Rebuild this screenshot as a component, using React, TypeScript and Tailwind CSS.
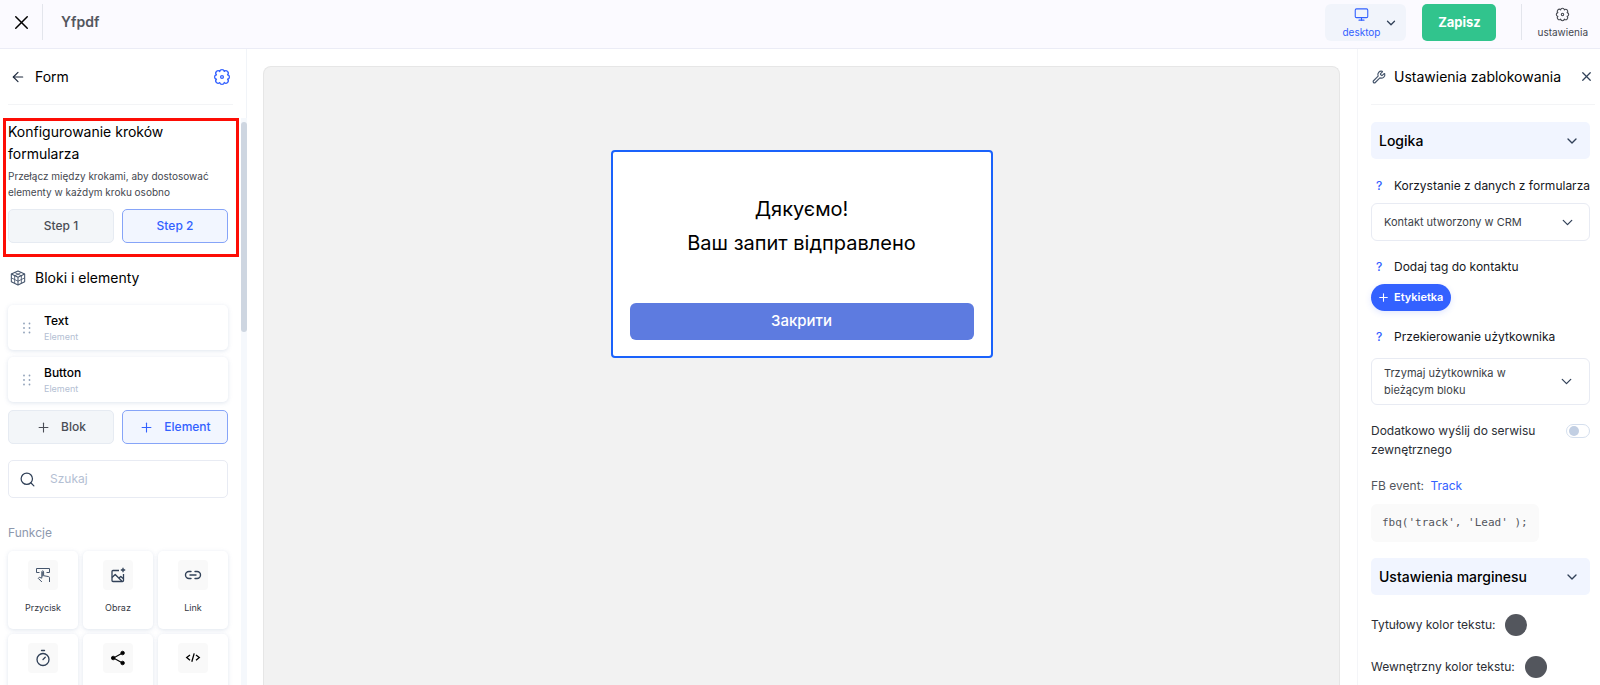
import React from 'react';
import {
    ArrowLeft,
    ChevronDown,
    Monitor,
    Plus,
    Search,
    Timer,
    Wrench,
    X,
} from 'lucide-react';

interface IconProps {
    className?: string;
}

// ── Icons ─────────────────────────────────────────

const GearIcon: React.FC<IconProps> = ({ className }) => (
    <svg viewBox="0 0 24 24" fill="none" stroke="currentColor" strokeWidth="1.7" strokeLinejoin="round" className={className} aria-hidden="true">
        <path d="M19.4 9A3.05 3.05 0 0 1 19.4 15A3.05 3.05 0 0 1 15 19.4A3.05 3.05 0 0 1 9 19.4A3.05 3.05 0 0 1 4.6 15A3.05 3.05 0 0 1 4.6 9A3.05 3.05 0 0 1 9 4.6A3.05 3.05 0 0 1 15 4.6A3.05 3.05 0 0 1 19.4 9Z" />
        <circle cx="12" cy="12" r="1.9" />
    </svg>
);

const CubeIcon: React.FC<IconProps> = ({ className }) => (
    <svg viewBox="0 0 24 24" fill="none" stroke="currentColor" strokeWidth="0.9" strokeLinejoin="round" className={className} aria-hidden="true">
        <path d="M12 1.5 22 6v11.5L12 22.5 2 17.5V6z" strokeWidth="1.6" />
        <path d="M2 6l10 5 10-5M12 11v11.5" strokeWidth="1.6" />
        <path d="M7 3.7l10 5v11.2M17 3.7l-10 5v11.2M2 11.8l10 5 10-5" strokeWidth="1.3" />
    </svg>
);

const GripIcon: React.FC<IconProps> = ({ className }) => (
    <svg viewBox="0 0 8 12" fill="currentColor" className={className} aria-hidden="true">
        <circle cx="1" cy="1.5" r="0.9" />
        <circle cx="6.5" cy="1.5" r="0.9" />
        <circle cx="1" cy="6" r="0.9" />
        <circle cx="6.5" cy="6" r="0.9" />
        <circle cx="1" cy="10.5" r="0.9" />
        <circle cx="6.5" cy="10.5" r="0.9" />
    </svg>
);

const PressIcon: React.FC<IconProps> = ({ className }) => (
    <svg viewBox="0 0 16 16" fill="none" stroke="currentColor" strokeWidth="1" strokeLinejoin="round" className={className} aria-hidden="true">
        <path d="M4.5 5.5h-3v-4h13v4h-3" />
        <path d="M6.8 11.2V4.8a.9.9 0 0 1 1.8 0v3.9l5 .9a1.1 1.1 0 0 1 .9 1.1v4.3M6.8 11.2l-2.5-1-1 1.2 3.6 3.6" />
        <path d="M7.7 5v4.5" />
    </svg>
);

const PictureIcon: React.FC<IconProps> = ({ className }) => (
    <svg viewBox="0 0 16 16" fill="none" stroke="currentColor" strokeWidth="1.3" strokeLinejoin="round" className={className} aria-hidden="true">
        <path d="M9 3.5H3a1 1 0 0 0-1 1v9a1 1 0 0 0 1 1h9.5a1 1 0 0 0 1-1V7" />
        <path d="M2 10.5l3.2-3 6.8 6.8M9 11l1.8-1.6 2.7 2.4" />
        <path d="M13 .8v4.4M10.8 3h4.4" />
    </svg>
);

const ChainIcon: React.FC<IconProps> = ({ className }) => (
    <svg viewBox="0 0 18 16" fill="none" stroke="currentColor" strokeWidth="1.4" strokeLinecap="round" className={className} aria-hidden="true">
        <path d="M7 4.5H5a3.5 3.5 0 0 0 0 7h2M11 4.5h2a3.5 3.5 0 0 1 0 7h-2M6 8h6" />
    </svg>
);

const ShareIcon: React.FC<IconProps> = ({ className }) => (
    <svg viewBox="0 0 16 16" fill="currentColor" stroke="currentColor" strokeWidth="0.8" className={className} aria-hidden="true">
        <path d="M12.5 3 3.5 8l9 5" fill="none" strokeWidth="1.1" />
        <circle cx="12.6" cy="3" r="1.8" />
        <circle cx="3.2" cy="8" r="1.8" />
        <circle cx="12.6" cy="13" r="1.8" />
    </svg>
);

const CodeIcon: React.FC<IconProps> = ({ className }) => (
    <svg viewBox="0 0 16 16" fill="none" stroke="currentColor" strokeWidth="1.3" className={className} aria-hidden="true">
        <path d="M5 5 1.7 7.6 5 10.2M11 5l3.3 2.6L11 10.2M9.2 3.4 6.8 11.8" />
    </svg>
);

// ── Data ──────────────────────────────────────────

const elements = ['Text', 'Button'];

const tools = [
    { id: 'button', label: 'Przycisk', icon: <PressIcon className="size-4 text-slate-600" /> },
    { id: 'image', label: 'Obraz', icon: <PictureIcon className="size-4 text-slate-700" /> },
    { id: 'link', label: 'Link', icon: <ChainIcon className="h-4 w-[18px] text-slate-700" /> },
    { id: 'timer', icon: <Timer size={18} strokeWidth={1.75} className="text-slate-700" /> },
    { id: 'share', icon: <ShareIcon className="size-4 text-black" /> },
    { id: 'html', icon: <CodeIcon className="size-4 text-black" /> },
];

// ── Small pieces ──────────────────────────────────

interface PairButtonProps {
    active?: boolean;
    children: React.ReactNode;
}

const PairButton: React.FC<PairButtonProps> = ({ active, children }) => (
    <button
        type="button"
        className={
            active
                ? 'flex h-[34px] items-center justify-center gap-[10px] rounded-[5px] border border-[#86a4f8] bg-[#f2f6ff] text-xs font-medium text-[#3361ff]'
                : 'flex h-[34px] items-center justify-center gap-[10px] rounded-[5px] border border-[#e6ebf2] bg-[#f3f6f9] text-xs font-medium text-[#4a4d55]'
        }
    >
        {children}
    </button>
);

const SectionToggle: React.FC<{ title: string }> = ({ title }) => (
    <button type="button" className="flex h-[37px] w-full shrink-0 items-center justify-between rounded-[5px] bg-[#f1f5ff] pr-[10px] pl-2 text-sm font-medium text-black">
        {title}
        <ChevronDown size={16} className="text-slate-700" />
    </button>
);

const HelpLabel: React.FC<{ htmlFor?: string; text: string }> = ({ htmlFor, text }) => (
    <div className="flex h-[18px] items-center">
        <button type="button" aria-label="Pomoc" className="w-[23px] pl-[5px] text-left text-xs font-medium text-[#3361ff]">?</button>
        <label htmlFor={htmlFor} className="text-xs whitespace-nowrap text-[#15171c]">{text}</label>
    </div>
);

const ColorRow: React.FC<{ id: string; label: string }> = ({ id, label }) => (
    <div className="flex h-[42px] shrink-0 items-center gap-[10px]">
        <label htmlFor={id} className="text-xs text-[#2b2e35]">{label}</label>
        <button id={id} type="button" className="size-[22px] rounded-full bg-[#53565d]" />
    </div>
);

// ── Header ────────────────────────────────────────

const Header: React.FC = () => (
    <header className="flex h-[49px] shrink-0 items-start border-b border-[#ebecf6] bg-[#fbfaff] pt-1">
        <button type="button" aria-label="Zamknij" className="flex h-9 w-[42px] items-center justify-center text-black">
            <X size={23} strokeWidth={1.5} />
        </button>
        <div className="flex h-9 flex-1 items-center border-l border-[#e3e5ec] pl-[18px]">
            <h1 className="text-sm font-semibold text-[#53565d]">Yfpdf</h1>
        </div>
        <button type="button" aria-haspopup="menu" className="flex h-[37px] w-[81px] items-center justify-end gap-1 rounded-md bg-[#f1f4fb] pr-2 text-[#3361ff]">
            <span className="flex flex-col items-center">
                <Monitor size={15} strokeWidth={1.75} />
                <span className="mt-[3px] text-[10px] leading-[14px]">desktop</span>
            </span>
            <ChevronDown size={14} strokeWidth={2.25} className="text-slate-700" />
        </button>
        <button type="button" className="ml-4 h-[37px] w-[74px] rounded-[5px] bg-[#31c48d] text-[13px] font-bold text-white">Zapisz</button>
        <div className="ml-[25px] h-9 border-l border-[#e3e5ec] pr-3 pl-[15px]">
            <button type="button" className="flex h-9 flex-col items-center justify-end pb-px text-[#44474f]">
                <GearIcon className="size-[15px]" />
                <span className="mt-[3px] text-[10px] leading-[14px]">ustawienia</span>
            </button>
        </div>
    </header>
);

// ── Left sidebar ──────────────────────────────────

const Sidebar: React.FC = () => (
    <aside className="flex w-[247px] shrink-0 flex-col border-r border-[#f1f4f8]">
        <div className="mr-[13px] ml-2 flex h-14 shrink-0 items-center border-b border-[#f3f4f6] pr-[2px] pl-[2px]">
            <button type="button" aria-label="Wstecz" className="text-slate-800">
                <ArrowLeft size={16} strokeWidth={1.75} />
            </button>
            <h2 className="ml-[9px] flex-1 text-sm text-black">Form</h2>
            <button type="button" aria-label="Ustawienia formularza" className="text-[#3361ff]">
                <GearIcon className="size-[18px]" />
            </button>
        </div>

        <div className="mt-[13px] -mr-px flex min-h-0 flex-1 justify-between">
            <div className="w-[239px] overflow-hidden pl-[3px]">
                {/* Step switcher */}
                <section className="h-[139px] border-3 border-[#fd0d05] pr-2 pl-[2px]">
                    <h3 className="text-sm leading-[22px] text-black">Konfigurowanie kroków formularza</h3>
                    <p className="mt-[3px] text-[10px] leading-4 whitespace-nowrap text-[#44474f]">
                        Przełącz między krokami, aby dostosować<br />
                        elementy w każdym kroku osobno
                    </p>
                    <div className="mt-[9px] grid grid-cols-2 gap-2">
                        <PairButton>Step 1</PairButton>
                        <PairButton active>Step 2</PairButton>
                    </div>
                </section>

                <div className="pr-[11px] pl-[5px]">
                    <div className="mt-[10px] flex h-[22px] items-center gap-[9px] pl-[2px]">
                        <CubeIcon className="size-4 text-slate-600" />
                        <h3 className="text-sm text-black">Bloki i elementy</h3>
                    </div>

                    <ul className="mt-4 flex flex-col gap-[7px]">
                        {elements.map(name => (
                            <li key={name} className="flex h-[45px] items-center rounded-[5px] bg-white pl-[15px] shadow-[0_1px_4px_rgba(148,170,200,0.3)]">
                                <GripIcon className="h-3 w-2 text-slate-400" />
                                <div className="ml-[13px] pt-[2px]">
                                    <p className="text-xs leading-4 font-medium text-black">{name}</p>
                                    <p className="text-[9px] leading-4 text-[#b4c0d3]">Element</p>
                                </div>
                            </li>
                        ))}
                    </ul>

                    <div className="mt-2 grid grid-cols-2 gap-2">
                        <PairButton><Plus size={15} strokeWidth={1.75} />Blok</PairButton>
                        <PairButton active><Plus size={15} strokeWidth={1.75} />Element</PairButton>
                    </div>

                    <div className="mt-4 flex h-[38px] items-center rounded-[5px] border border-[#e8ebf3] px-[10px]">
                        <Search size={17} strokeWidth={1.75} className="shrink-0 text-slate-700" />
                        <input type="text" aria-label="Szukaj" placeholder="Szukaj" className="ml-[14px] w-full min-w-0 text-xs outline-none placeholder:text-[#b4c0d3]" />
                    </div>

                    <h4 className="mt-[26px] text-xs leading-[18px] text-[#8d98ad]">Funkcje</h4>
                    <div className="mt-[9px] grid grid-cols-3 gap-[5px] pb-4">
                        {tools.map(tool => (
                            <button key={tool.id} type="button" aria-label={tool.id} className="flex h-[78px] flex-col items-center rounded-[5px] bg-white pt-[9px] shadow-[0_1px_4px_rgba(148,170,200,0.3)]">
                                <span className="flex size-[30px] items-center justify-center rounded bg-[#f9f9f9]">{tool.icon}</span>
                                {tool.label && <span className="mt-[11px] text-[9px] leading-[14px] text-[#34373f]">{tool.label}</span>}
                            </button>
                        ))}
                    </div>
                </div>
            </div>

            {/* Scroll track */}
            <div className="w-[6px] bg-[#f5f8fc]">
                <div className="mt-1 h-[210px] rounded-[3px] bg-[#ced6e1]" />
            </div>
        </div>
    </aside>
);

// ── Canvas ────────────────────────────────────────

const Canvas: React.FC = () => (
    <main className="flex min-w-0 flex-1 pt-[17px] pr-[17px] pl-4">
        <div className="flex-1 rounded-t-lg border border-b-0 border-[#e6e6e6] bg-[#f2f2f2] pt-[83px]">
            <div className="mx-auto w-[382px] rounded-[4px] border-2 border-[#1a62fb] bg-white px-[17px] pt-10 pb-4">
                <p className="text-center text-xl leading-[34px] text-black">
                    Дякуємо!<br />
                    Ваш запит відправлено
                </p>
                <button type="button" className="mt-[43px] h-[37px] w-full rounded-md bg-[#5d7be0] text-[15px] font-medium text-white">Закрити</button>
            </div>
        </div>
    </main>
);

// ── Right settings panel ──────────────────────────

const SettingsPanel: React.FC = () => (
    <aside className="flex w-[243px] shrink-0 flex-col overflow-hidden border-l border-[#f4f5f8] pl-[13px]">
        <div className="mr-[5px] flex h-14 shrink-0 items-center border-b border-[#f3f4f6]">
            <Wrench size={14} className="ml-px text-slate-600" />
            <h2 className="ml-2 flex-1 text-sm whitespace-nowrap text-black">Ustawienia zablokowania</h2>
            <button type="button" aria-label="Zamknij panel" className="mr-px text-slate-700">
                <X size={15} strokeWidth={2} />
            </button>
        </div>

        <div className="mr-[10px] flex flex-col pt-[17px]">
            <SectionToggle title="Logika" />

            <div className="mt-[18px]">
                <HelpLabel htmlFor="form-data" text="Korzystanie z danych z formularza" />
                <div className="mt-2 grid items-center">
                    <select id="form-data" className="col-start-1 row-start-1 h-[38px] w-full appearance-none rounded-md border border-[#e8ebf3] bg-white pr-8 pl-3 text-[11px] text-[#3c3f47]">
                        <option>Kontakt utworzony w CRM</option>
                    </select>
                    <ChevronDown size={17} strokeWidth={1.75} className="pointer-events-none col-start-1 row-start-1 mr-[14px] justify-self-end text-slate-700" />
                </div>
            </div>

            <div className="mt-[17px]">
                <HelpLabel htmlFor="add-tag" text="Dodaj tag do kontaktu" />
                <button id="add-tag" type="button" className="mt-2 flex h-[27px] items-center gap-1 rounded-full bg-[#3361ff] pr-2 pl-[6px] text-[11px] font-semibold text-white shadow-[0_2px_6px_rgba(51,97,255,0.15)]">
                    <Plus size={13} />
                    Etykietka
                </button>
            </div>

            <div className="mt-[17px]">
                <HelpLabel htmlFor="redirect" text="Przekierowanie użytkownika" />
                <div className="relative mt-3 flex h-[47px] items-center justify-between rounded-md border border-[#e8ebf3] pr-[14px] pl-3">
                    <span className="w-[140px] text-[11px] leading-[17px] text-[#3c3f47]">Trzymaj użytkownika w bieżącym bloku</span>
                    <ChevronDown size={17} strokeWidth={1.75} className="text-slate-700" />
                    <select id="redirect" className="absolute inset-0 w-full opacity-0">
                        <option>Trzymaj użytkownika w bieżącym bloku</option>
                    </select>
                </div>
            </div>

            <div className="mt-4 flex justify-between">
                <label htmlFor="external" className="w-[180px] text-xs leading-[19px] text-[#2b2e35]">Dodatkowo wyślij do serwisu zewnętrznego</label>
                <input
                    id="external"
                    type="checkbox"
                    role="switch"
                    className="mt-[3px] h-[14px] w-6 appearance-none rounded-full border border-[#d5dfee] before:ml-[2px] before:mt-px before:block before:size-[10px] before:rounded-full before:bg-[#c2cfe3]"
                />
            </div>

            <p className="mt-[18px] text-xs leading-[18px] text-[#53565d]">
                FB event: <a href="#track" className="ml-[3px] text-[#3361ff]">Track</a>
            </p>
            <pre className="mt-[9px] self-start rounded-md bg-[#fafafa] px-[11px] text-[11px] leading-[38px] text-[#53565d] [font-family:'DejaVu_Sans_Mono',monospace]">fbq('track', 'Lead' );</pre>

            <div className="mt-4 mb-[9px]">
                <SectionToggle title="Ustawienia marginesu" />
            </div>
            <ColorRow id="title-color" label="Tytułowy kolor tekstu:" />
            <ColorRow id="inner-color" label="Wewnętrzny kolor tekstu:" />
        </div>
    </aside>
);

export default function App() {
    return (
        <div className="flex h-screen min-w-[900px] flex-col overflow-hidden bg-white antialiased [font-family:Inter,sans-serif]">
            <Header />
            <div className="flex min-h-0 flex-1">
                <Sidebar />
                <Canvas />
                <SettingsPanel />
            </div>
        </div>
    );
}
